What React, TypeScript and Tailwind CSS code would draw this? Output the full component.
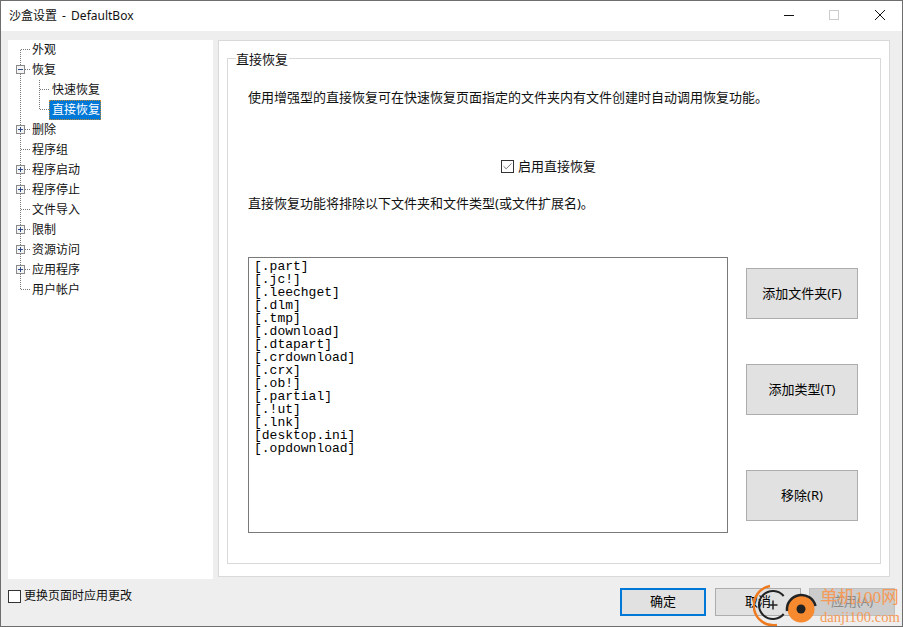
import { Check } from 'lucide-react';

const font = '[font-family:"Noto_Sans","Noto_Sans_CJK_SC",sans-serif]';

type Kind = 'first' | 'leaf' | 'last' | 'plus' | 'minus' | 'child' | 'childLast';

function Connector({ kind }: { kind: Kind }) {
  const dot = { stroke: '#777', strokeWidth: 1, strokeDasharray: '1 1', fill: 'none' };
  const isChild = kind === 'child' || kind === 'childLast';
  return (
    <svg width="44" height="20" className="shrink-0">
      <line x1="12.5" y1={kind === 'first' ? 10 : 0} x2="12.5" y2={kind === 'last' ? 10 : 20} {...dot} />
      {!isChild && <line x1="13" y1="9.5" x2="23" y2="9.5" {...dot} />}
      {isChild && <line x1="31.5" y1="0" x2="31.5" y2={kind === 'childLast' ? 10 : 20} {...dot} />}
      {isChild && <line x1="32" y1="9.5" x2="42" y2="9.5" {...dot} />}
      {(kind === 'plus' || kind === 'minus') && (
        <g>
          <rect x="8.5" y="5.5" width="8" height="8" fill="#f4f4f4" stroke="#8a8a8a" />
          <line x1="10" y1="9.5" x2="15" y2="9.5" stroke="#2f4a85" />
          {kind === 'plus' && <line x1="12.5" y1="7" x2="12.5" y2="12" stroke="#2f4a85" />}
        </g>
      )}
    </svg>
  );
}

const tree: { label: string; kind: Kind; selected?: boolean }[] = [
  { label: '外观', kind: 'first' },
  { label: '恢复', kind: 'minus' },
  { label: '快速恢复', kind: 'child' },
  { label: '直接恢复', kind: 'childLast', selected: true },
  { label: '删除', kind: 'plus' },
  { label: '程序组', kind: 'leaf' },
  { label: '程序启动', kind: 'plus' },
  { label: '程序停止', kind: 'plus' },
  { label: '文件导入', kind: 'leaf' },
  { label: '限制', kind: 'plus' },
  { label: '资源访问', kind: 'plus' },
  { label: '应用程序', kind: 'plus' },
  { label: '用户帐户', kind: 'last' },
];

const files = [
  '[.part]',
  '[.jc!]',
  '[.leechget]',
  '[.dlm]',
  '[.tmp]',
  '[.download]',
  '[.dtapart]',
  '[.crdownload]',
  '[.crx]',
  '[.ob!]',
  '[.partial]',
  '[.!ut]',
  '[.lnk]',
  '[desktop.ini]',
  '[.opdownload]',
];

function SideButton({ label, className }: { label: string; className: string }) {
  return (
    <button className={`w-[112px] h-[51px] bg-[#e1e1e1] border border-[#adadad] text-[13px] text-black ${className}`}>
      {label}
    </button>
  );
}

function FooterButton({ label, className }: { label: string; className: string }) {
  return <button className={`w-[86px] h-[28px] text-[13px] ${className}`}>{label}</button>;
}

function Watermark() {
  return (
    <div className="absolute left-[752px] top-[583px] w-[150px] h-[43px] flex items-start pointer-events-none">
      <svg width="64" height="43" className="shrink-0">
        <path d="M17 2 A19.5 19.5 0 0 0 24 41" stroke="#ee7a1f" strokeWidth="2.5" fill="none" />
        <path d="M30.7 12 A14 14 0 1 0 30.7 30" stroke="#222" strokeWidth="2" fill="none" />
        <path d="M15.5 21 H24.5 M20 16.5 V25.5" stroke="#222" strokeWidth="1.5" />
        <circle cx="48" cy="25" r="13.5" fill="#f7892f" />
        <path d="M34 27 A14.5 14.5 0 0 1 62.5 22" stroke="#222" strokeWidth="2.5" fill="none" />
        <circle cx="48" cy="25" r="4.5" fill="#222" />
      </svg>
      <div className="flex flex-col ml-[3px] text-[#f59a58] [font-family:'Liberation_Serif','Noto_Sans_CJK_SC',serif]">
        <span className="text-[17.5px] leading-[22px] mt-[2px] whitespace-nowrap">单机100网</span>
        <span className="text-[14.6px] leading-[17px] mt-[1px] whitespace-nowrap">danji100.com</span>
      </div>
    </div>
  );
}

export default function App() {
  return (
    <div className={`relative w-[903px] h-[627px] flex flex-col bg-[#eeeeee] border border-[#6e6e6e] overflow-hidden text-[#111] ${font}`}>
      <div className="h-[30px] shrink-0 bg-white flex items-center pl-[8px] text-[12px]">
        <span className="[word-spacing:2px]">沙盒设置 - DefaultBox</span>
        <div className="ml-auto flex items-center">
          <svg width="46" height="30"><path d="M20 14.5 H30" stroke="#111" /></svg>
          <svg width="46" height="30"><rect x="19.5" y="9.5" width="9" height="9" fill="none" stroke="#ccc" /></svg>
          <svg width="46" height="30"><path d="M19 9 L29 19 M29 9 L19 19" stroke="#111" /></svg>
        </div>
      </div>

      <div className="flex mt-[9px] pl-[7px] h-[539px]">
        <div className="w-[205px] h-full bg-white shrink-0">
          {tree.map((row) => (
            <div key={row.label} className="h-5 flex items-center text-[12px]">
              <Connector kind={row.kind} />
              <span className={`h-5 leading-5 ${row.selected ? 'bg-[#0078d7] text-white outline-1 outline-dotted outline-[#c98a2b] -outline-offset-1 -ml-[3px] pl-[3px] pr-[1px]' : ''} ${row.kind === 'child' || row.kind === 'childLast' ? '' : '-ml-[20px]'}`}>
                {row.label}
              </span>
            </div>
          ))}
        </div>

        <div className="ml-[5px] w-[672px] h-[537px] border border-[#d9d9d9] bg-white pt-[17px] px-[8px]">
          <div className="relative w-[654px] h-[506px] border border-[#d9d9d9] pl-[20px] pt-[30px] text-[13px]">
            <span className="absolute left-[8px] -top-[8px] bg-white leading-[16px] pr-[1px]">直接恢复</span>
            <p className="leading-[16px]">使用增强型的直接恢复可在快速恢复页面指定的文件夹内有文件创建时自动调用恢复功能。</p>
            <label className="flex items-center justify-center mt-[53px] pr-[31px] h-[16px] leading-[16px]">
              <span className="w-[13px] h-[13px] border border-[#333] flex items-center justify-center mr-[4px]">
                <Check size={11} strokeWidth={1.6} className="text-[#444]" />
              </span>
              启用直接恢复
            </label>
            <p className="mt-[21px] leading-[16px]">直接恢复功能将排除以下文件夹和文件类型(或文件扩展名)。</p>
            <div className="flex mt-[46px]">
              <div className="w-[480px] h-[276px] border border-[#7a7a7a] pl-[5px] pt-[2px] font-['Liberation_Mono',monospace] text-[13px] leading-[13px] text-black">
                {files.map((f) => (
                  <div key={f} className="h-[13px] whitespace-pre">{f}</div>
                ))}
              </div>
              <div className="ml-[18px] flex flex-col pt-[11px]">
                <SideButton label="添加文件夹(F)" className="" />
                <SideButton label="添加类型(T)" className="mt-[45px]" />
                <SideButton label="移除(R)" className="mt-[55px]" />
              </div>
            </div>
          </div>
        </div>
      </div>

      <div className="flex items-start pl-[7px] pr-[7px] flex-1">
        <label className="flex items-center mt-[9px] h-[16px] text-[12px] leading-[16px]">
          <span className="w-[13px] h-[13px] border border-[#333] bg-white mr-[3px]" />
          更换页面时应用更改
        </label>
        <div className="ml-auto flex gap-[9px] mt-[9px]">
          <FooterButton label="确定" className="border-2 border-[#0078d7] bg-[#e1e1e1] text-black" />
          <FooterButton label="取消" className="border border-[#adadad] bg-[#e1e1e1] text-black" />
          <FooterButton label="应用(A)" className="-ml-[1px] border border-[#bfbfbf] bg-[#cccccc] text-[#8a8a8a]" />
        </div>
      </div>

      <Watermark />
    </div>
  );
}
